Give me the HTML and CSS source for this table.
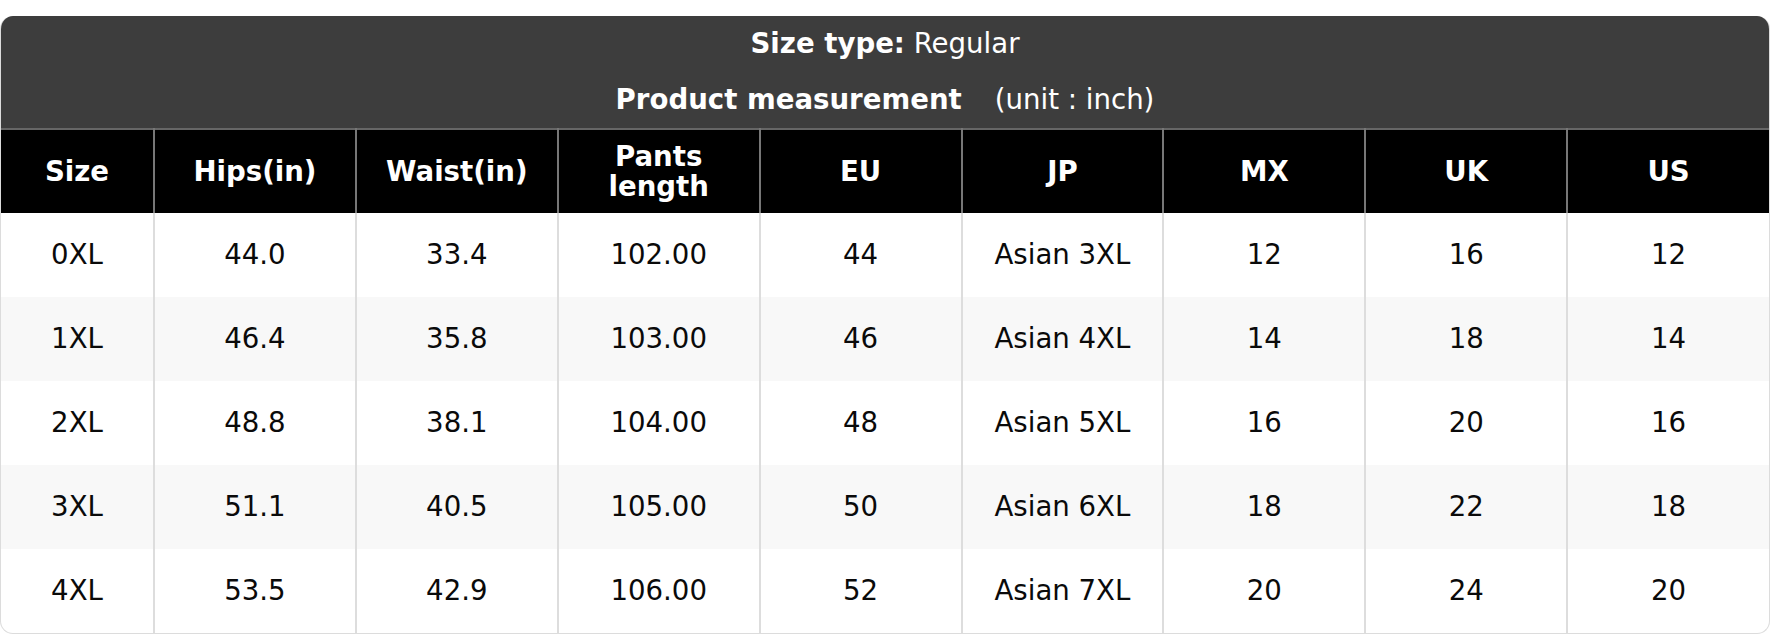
FILE: index.html
```html
<!DOCTYPE html>
<html>
<head>
<meta charset="utf-8">
<link rel="stylesheet" href="styles.css">
</head>
<body>
<div class="chart">
  <div class="title">
    <div class="title-line"><b>Size type:</b> Regular</div>
    <div class="title-line"><b>Product measurement</b><span class="unit">(unit : inch)</span></div>
  </div>
  <table class="size-table">
    <colgroup>
      <col class="col-size"><col><col><col><col><col><col><col><col>
    </colgroup>
    <thead>
      <tr><th>Size</th><th>Hips(in)</th><th>Waist(in)</th><th>Pants<br>length</th><th>EU</th><th>JP</th><th>MX</th><th>UK</th><th>US</th></tr>
    </thead>
    <tbody>
      <tr><td>0XL</td><td>44.0</td><td>33.4</td><td>102.00</td><td>44</td><td>Asian 3XL</td><td>12</td><td>16</td><td>12</td></tr>
      <tr><td>1XL</td><td>46.4</td><td>35.8</td><td>103.00</td><td>46</td><td>Asian 4XL</td><td>14</td><td>18</td><td>14</td></tr>
      <tr><td>2XL</td><td>48.8</td><td>38.1</td><td>104.00</td><td>48</td><td>Asian 5XL</td><td>16</td><td>20</td><td>16</td></tr>
      <tr><td>3XL</td><td>51.1</td><td>40.5</td><td>105.00</td><td>50</td><td>Asian 6XL</td><td>18</td><td>22</td><td>18</td></tr>
      <tr><td>4XL</td><td>53.5</td><td>42.9</td><td>106.00</td><td>52</td><td>Asian 7XL</td><td>20</td><td>24</td><td>20</td></tr>
    </tbody>
  </table>
</div>
</body>
</html>
```

FILE: styles.css
```css
html, body {
  margin: 0;
  padding: 0;
  background: #ffffff;
}

body {
  padding-top: 16px;
  font-family: "DejaVu Sans", "Noto Sans", sans-serif;
}

.chart {
  width: 1770px;
  box-sizing: border-box;
  border: 1px solid #dcdcdc;
  border-top: none;
  border-radius: 13px;
  overflow: hidden;
  background: #ffffff;
}

.title {
  background: #3d3d3d;
  color: #ffffff;
  text-align: center;
  font-size: 27.6px;
  height: 112px;
}

.title-line {
  line-height: 56px;
  white-space: nowrap;
}

.title-line b {
  font-weight: 700;
}

.unit {
  margin-left: 33px;
}

.size-table {
  width: 100%;
  border-collapse: collapse;
  table-layout: fixed;
  font-size: 27.6px;
}

.col-size {
  width: 153px;
}

.size-table th {
  background: #000000;
  color: #ffffff;
  font-weight: 700;
  height: 83px;
  padding: 0 8px;
  line-height: 30px;
  text-align: center;
  vertical-align: middle;
  border-top: 2px solid #666666;
  border-left: 2px solid #777777;
  border-right: 2px solid #777777;
}

.size-table th:first-child {
  border-left: none;
}

.size-table th:last-child {
  border-right: none;
}

.size-table td {
  height: 84px;
  padding: 0 8px;
  line-height: 30px;
  text-align: center;
  vertical-align: middle;
  color: #0a0a0a;
  border-left: 2px solid #dddddd;
  border-right: 2px solid #dddddd;
}

.size-table td:first-child {
  border-left: none;
}

.size-table td:last-child {
  border-right: none;
}

.size-table tbody tr:nth-child(even) td {
  background: #f8f8f8;
}
```
